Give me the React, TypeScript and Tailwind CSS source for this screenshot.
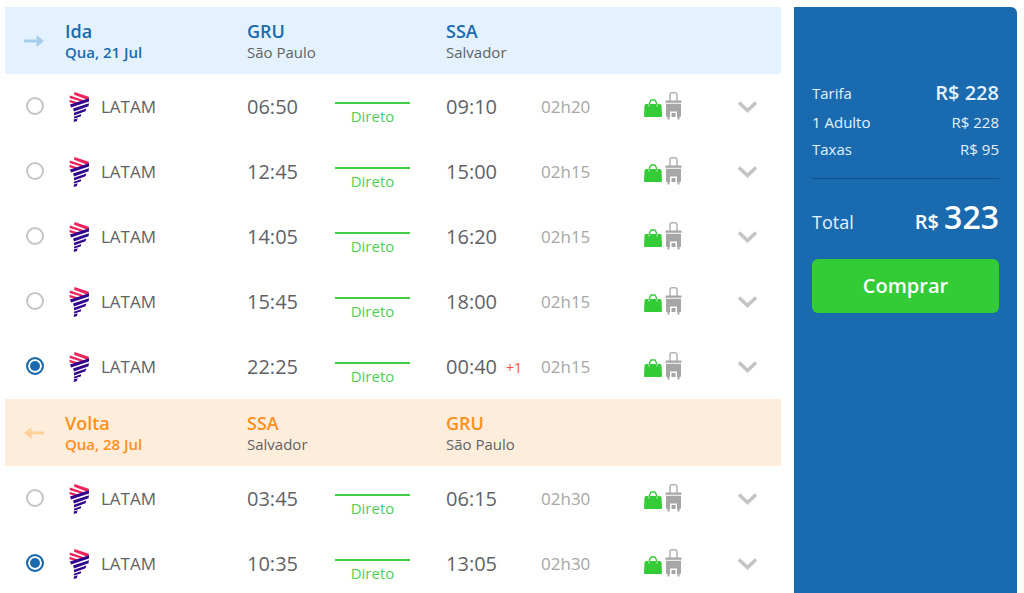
import React from "react";

type Flight = { dep: string; arr: string; duration: string; nextDay?: boolean };
type Leg = {
  id: string;
  label: string;
  date: string;
  from: [string, string];
  to: [string, string];
  selected: number;
  flights: Flight[];
};

const legs: Leg[] = [
  {
    id: "ida",
    label: "Ida",
    date: "Qua, 21 Jul",
    from: ["GRU", "São Paulo"],
    to: ["SSA", "Salvador"],
    selected: 4,
    flights: [
      { dep: "06:50", arr: "09:10", duration: "02h20" },
      { dep: "12:45", arr: "15:00", duration: "02h15" },
      { dep: "14:05", arr: "16:20", duration: "02h15" },
      { dep: "15:45", arr: "18:00", duration: "02h15" },
      { dep: "22:25", arr: "00:40", duration: "02h15", nextDay: true },
    ],
  },
  {
    id: "volta",
    label: "Volta",
    date: "Qua, 28 Jul",
    from: ["SSA", "Salvador"],
    to: ["GRU", "São Paulo"],
    selected: 1,
    flights: [
      { dep: "03:45", arr: "06:15", duration: "02h30" },
      { dep: "10:35", arr: "13:05", duration: "02h30" },
    ],
  },
];

function Arrow({ back }: { back: boolean }) {
  return (
    <svg
      width="20"
      height="12"
      viewBox="0 0 20 12"
      aria-hidden="true"
      className={back ? "rotate-180 text-[#ffd199]" : "text-[#a6cdec]"}
    >
      <path d="M0 4.500h12.500V0L20 6l-7.500 6V7.500H0z" fill="currentColor" />
    </svg>
  );
}

function LatamLogo() {
  return (
    <svg width="22" height="30" viewBox="0 0 22 30" aria-hidden="true" className="shrink-0">
      <g fill="#f0245c">
        <path d="M5.500 0 L19.800 4.800 V6.800 L17.500 7.400 L5 2.800z" />
        <path d="M1 3.400 L15 8.200 L12.200 9.600 L0.500 6z" />
        <path d="M0.500 7.800 L9 10.400 L6 11.700 L0.500 10.200z" />
      </g>
      <g fill="#32068c">
        <path d="M20 6.200 V9.500 L2 15.600 L1 12.600z" />
        <path d="M20 11.200 L19.500 14.200 L5 19.400 L4 16.500z" />
        <path d="M17.500 16.500 L16.500 19.300 L5 23.600 V20.800z" />
        <path d="M12 22.200 V24.200 L8.500 25.600 L5 26.400 V24.700z" />
        <path d="M8.500 26.200 L8 29 L4.800 30 V27.400z" />
      </g>
    </svg>
  );
}

function Bags() {
  return (
    <svg width="38" height="30" viewBox="0 0 38 30" role="img" aria-label="Bagagem de mão incluída">
      <path d="M.5 13.500q0-1.500 1.500-1.500h14q1.500 0 1.500 1.500l.5 10.500q0 1-1 1H1q-1 0-1-1z" fill="#33cc36" />
      <path d="M5 12v2.500M13 12v2.500" stroke="#c8f2c9" strokeWidth="1" />
      <path d="M5.500 12.500V11l1.500-3h4l1.500 3v1.500" fill="none" stroke="#33cc36" strokeWidth="1.400" strokeLinejoin="round" />
      <path
        d="M26 9V2.800A2 2 0 0 1 28 .8h3a2 2 0 0 1 2 2V9"
        fill="none"
        stroke="#b3b3b3"
        strokeWidth="1.500"
      />
      <g fill="#a6a6a6">
        <rect x="21.500" y="8.500" width="16" height="2.200" rx=".5" />
        <path d="M22 11.700h15V24a1 1 0 0 1-1 1h-.5v2.500h-2V25H33v-5.500h-7V25h-.5v2.500h-2V25H23a1 1 0 0 1-1-1z" />
        <path d="M27.500 21h4v4h-4z" />
      </g>
    </svg>
  );
}

function LegTable({ leg }: { leg: Leg }) {
  const back = leg.id === "volta";
  const accent = back ? "text-[#ff8f1c]" : "text-[#196aae]";
  return (
    <table className="w-full table-fixed border-collapse text-left">
      <colgroup>
        <col className="w-[60px]" />
        <col className="w-[182px]" />
        <col className="w-[88px]" />
        <col className="w-[111px]" />
        <col className="w-[95px]" />
        <col className="w-[103px]" />
        <col className="w-[94px]" />
        <col className="w-[43px]" />
      </colgroup>
      <thead className={back ? "bg-[#ffeddb]" : "bg-[#e3f2fe]"}>
        <tr className="h-[67px]">
          <td className="pl-[19px]">
            <Arrow back={back} />
          </td>
          <th scope="col" className={`font-semibold ${accent}`}>
            <div className="text-lg leading-[22px]">{leg.label}</div>
            <div className="text-[15px] leading-5">{leg.date}</div>
          </th>
          <th scope="col" colSpan={2} className="font-normal">
            <div className={`text-lg leading-[22px] font-semibold ${accent}`}>{leg.from[0]}</div>
            <div className="text-[15px] leading-5">{leg.from[1]}</div>
          </th>
          <th scope="col" colSpan={4} className="font-normal">
            <div className={`text-lg leading-[22px] font-semibold ${accent}`}>{leg.to[0]}</div>
            <div className="text-[15px] leading-5">{leg.to[1]}</div>
          </th>
        </tr>
      </thead>
      <tbody>
        {leg.flights.map((f, i) => (
          <tr key={f.dep} className="h-[65px]">
            <td className="pb-[2px] pl-[21px]">
              <input
                type="radio"
                id={`${leg.id}-${i}`}
                name={leg.id}
                defaultChecked={i === leg.selected}
                className="block size-[18px] appearance-none rounded-full border-2 border-[#c4c4c4] bg-white checked:border-[#196aae] checked:bg-[#196aae] checked:shadow-[inset_0_0_0_2px_white]"
              />
            </td>
            <td>
              <label htmlFor={`${leg.id}-${i}`} className="flex items-center gap-[10px] pl-1 text-[17px]">
                <LatamLogo />
                LATAM
              </label>
            </td>
            <td className="text-xl">{f.dep}</td>
            <td>
              <div className="mt-[14px] w-[75px] border-t-2 border-[#3fce42] pt-[2px] text-center text-[15px] leading-5 text-[#4fd052]">
                Direto
              </div>
            </td>
            <td className="text-xl whitespace-nowrap">
              {f.arr}
              {f.nextDay && <span className="ml-[9px] align-[1px] text-sm text-[#fb4f48]">+1</span>}
            </td>
            <td className="text-[17px] text-[#a6a6a6]">{f.duration}</td>
            <td>
              <Bags />
            </td>
            <td>
              <button type="button" aria-label="Ver detalhes" className="block">
                <svg width="20" height="12" viewBox="0 0 20 12" aria-hidden="true">
                  <path d="M1 1.500L9.500 9.500l8.500-8" fill="none" stroke="#c4c4c4" strokeWidth="3.500" />
                </svg>
              </button>
            </td>
          </tr>
        ))}
      </tbody>
    </table>
  );
}

export default function App() {
  return (
    <div className="flex min-h-screen gap-[13px] bg-white pt-[7px] pr-[7px] pl-[5px] font-['Open_Sans',sans-serif] text-[#626266]">
      <main className="min-w-0 flex-1 overflow-x-auto">
        {legs.map((leg) => (
          <LegTable key={leg.id} leg={leg} />
        ))}
      </main>
      <aside className="w-[223px] shrink-0 rounded-tr-md bg-[#196aae] px-[18px] pt-[71px] text-[15px] text-[#e3f2fe]">
        <dl>
          <div className="flex h-[30px] items-center justify-between">
            <dt>Tarifa</dt>
            <dd className="text-xl font-semibold">R$ 228</dd>
          </div>
          <div className="flex h-7 items-center justify-between">
            <dt>1 Adulto</dt>
            <dd>R$ 228</dd>
          </div>
          <div className="flex h-[27px] items-center justify-between">
            <dt>Taxas</dt>
            <dd>R$ 95</dd>
          </div>
          <div className="mt-[15px] flex items-baseline justify-between border-t border-[#0f4f8a] pt-[18px]">
            <dt className="text-lg">Total</dt>
            <dd className="text-[32px] leading-10 font-semibold text-white">
              <span className="text-xl">R$ </span>323
            </dd>
          </div>
        </dl>
        <button
          type="button"
          className="mt-[22px] h-[54px] w-full rounded-md bg-[#33cc36] text-xl font-semibold text-white"
        >
          Comprar
        </button>
      </aside>
    </div>
  );
}
